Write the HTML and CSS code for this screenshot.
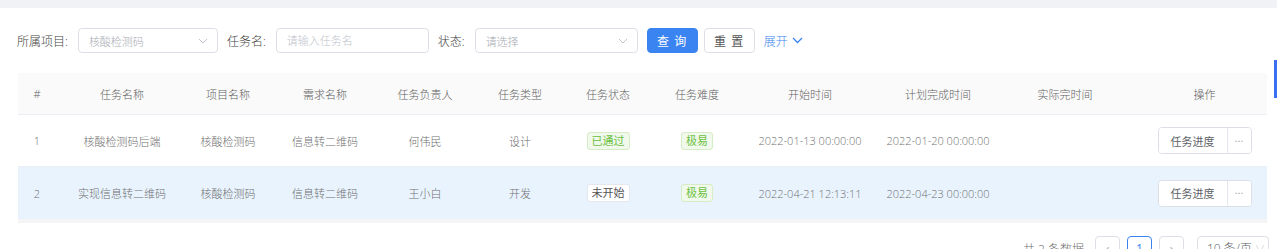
FILE: index.html
```html
<!DOCTYPE html>
<html lang="zh-CN">
<head>
    <meta charset="UTF-8">
    <meta name="viewport" content="width=device-width, initial-scale=1.0">
    <title>任务列表</title>
    <link rel="stylesheet" href="styles.css">
</head>
<body>
<div class="top-band"></div>
<div class="page">
    <form class="search-form">
        <div class="form-item">
            <label>所属项目:</label>
            <div class="select select-project">
                <span class="select-value">核酸检测码</span>
                <svg class="arrow" width="10" height="6" viewBox="0 0 10 6"><path d="M1 1l4 4 4-4" fill="none" stroke="#c0c4cc" stroke-width="1"/></svg>
            </div>
        </div>
        <div class="form-item">
            <label>任务名:</label>
            <input class="text-input" type="text" placeholder="请输入任务名">
        </div>
        <div class="form-item">
            <label>状态:</label>
            <div class="select select-status">
                <span class="select-value">请选择</span>
                <svg class="arrow" width="10" height="6" viewBox="0 0 10 6"><path d="M1 1l4 4 4-4" fill="none" stroke="#c0c4cc" stroke-width="1"/></svg>
            </div>
        </div>
        <button type="button" class="btn btn-primary">查 询</button>
        <button type="button" class="btn">重 置</button>
        <a class="expand-link">展开
            <svg width="11" height="7" viewBox="0 0 11 7"><path d="M1 1l4.5 4.5L10 1" fill="none" stroke="#3a84f2" stroke-width="1.3"/></svg>
        </a>
    </form>

    <div class="table-wrap">
        <table class="task-table">
            <colgroup>
                <col style="width:38px">
                <col style="width:132px">
                <col style="width:80px">
                <col style="width:114px">
                <col style="width:86px">
                <col style="width:104px">
                <col style="width:72px">
                <col style="width:106px">
                <col style="width:120px">
                <col style="width:136px">
                <col style="width:118px">
                <col style="width:143px">
            </colgroup>
            <thead>
            <tr>
                <th>#</th>
                <th>任务名称</th>
                <th>项目名称</th>
                <th>需求名称</th>
                <th>任务负责人</th>
                <th>任务类型</th>
                <th>任务状态</th>
                <th>任务难度</th>
                <th>开始时间</th>
                <th>计划完成时间</th>
                <th>实际完时间</th>
                <th class="col-action">操作</th>
            </tr>
            </thead>
            <tbody>
            <tr>
                <td>1</td>
                <td>核酸检测码后端</td>
                <td>核酸检测码</td>
                <td>信息转二维码</td>
                <td>何伟民</td>
                <td>设计</td>
                <td><span class="tag tag-success">已通过</span></td>
                <td><span class="tag tag-success">极易</span></td>
                <td>2022-01-13 00:00:00</td>
                <td>2022-01-20 00:00:00</td>
                <td></td>
                <td class="col-action">
                    <div class="btn-group">
                        <button type="button" class="group-main">任务进度</button>
                        <button type="button" class="group-more">⋯</button>
                    </div>
                </td>
            </tr>
            <tr class="row-active">
                <td>2</td>
                <td>实现信息转二维码</td>
                <td>核酸检测码</td>
                <td>信息转二维码</td>
                <td>王小白</td>
                <td>开发</td>
                <td><span class="tag tag-default">未开始</span></td>
                <td><span class="tag tag-success">极易</span></td>
                <td>2022-04-21 12:13:11</td>
                <td>2022-04-23 00:00:00</td>
                <td></td>
                <td class="col-action">
                    <div class="btn-group">
                        <button type="button" class="group-main">任务进度</button>
                        <button type="button" class="group-more">⋯</button>
                    </div>
                </td>
            </tr>
            </tbody>
        </table>
    </div>

    <div class="pagination">
        <span class="total">共 2 条数据</span>
        <button type="button" class="page-btn">&lsaquo;</button>
        <button type="button" class="page-btn page-current">1</button>
        <button type="button" class="page-btn">&rsaquo;</button>
        <div class="page-size">10 条/页 <span class="size-arrow">∨</span></div>
    </div>
</div>
<div class="side-tab"></div>
</body>
</html>
```

FILE: styles.css
```css
body {
    margin: 0;
    font-family: "Open Sans", "Noto Sans CJK SC", sans-serif;
    font-size: 11px;
    font-weight: 300;
    color: #707070;
    background-color: #fff;
    overflow: hidden;
}
.top-band {
    height: 8px;
    background-color: #f0f2f5;
}
.page {
    padding-top: 20px;
}
.search-form {
    display: flex;
    align-items: center;
    padding-left: 17px;
    height: 25px;
}
.form-item {
    display: flex;
    align-items: center;
    margin-right: 9px;
}
.form-item label {
    color: #444;
    font-size: 12px;
    margin-right: 10px;
    white-space: nowrap;
}
.select,
.text-input {
    box-sizing: border-box;
    height: 25px;
    border: 1px solid #dcdfe6;
    border-radius: 4px;
    background: #fff;
    font-family: inherit;
    font-weight: 300;
    font-size: 11px;
}
.select {
    display: flex;
    align-items: center;
    justify-content: space-between;
    padding: 0 9px 0 10px;
    color: #a8abb2;
}
.select-project {
    width: 140px;
}
.select-status {
    width: 163px;
}
.text-input {
    width: 153px;
    padding: 0 10px;
    color: #606266;
    outline: none;
}
.text-input::placeholder {
    color: #c0c4cc;
}
.btn {
    box-sizing: border-box;
    height: 25px;
    width: 51px;
    border: 1px solid #dcdfe6;
    border-radius: 4px;
    background: #fff;
    color: #555;
    font-family: inherit;
    font-size: 12px;
    letter-spacing: 1px;
    margin-right: 6px;
    padding: 0;
    cursor: pointer;
}
.btn-primary {
    background-color: #3a84f2;
    border-color: #3a84f2;
    color: #fff;
}
.expand-link {
    display: flex;
    align-items: center;
    gap: 4px;
    margin-left: 3px;
    font-size: 12px;
    color: #3a84f2;
    cursor: pointer;
}
.table-wrap {
    margin: 20px 0 0 18px;
    width: 1249px;
    border-bottom: 4px solid #f5f5f5;
}
.task-table {
    width: 1249px;
    table-layout: fixed;
    border-collapse: collapse;
}
.task-table th,
.task-table td {
    text-align: center;
    padding: 0;
    border-bottom: 1px solid #ebeef5;
    white-space: nowrap;
}
.task-table th {
    height: 41px;
    background-color: #fafafa;
    font-weight: 300;
    color: #606060;
}
.task-table td {
    height: 51px;
}
.task-table tbody tr:last-child td {
    height: 52px;
    border-bottom: none;
}
.task-table .col-action {
    padding-left: 18px;
}
.row-active td {
    background-color: #e8f3fe;
}
.tag {
    display: inline-block;
    box-sizing: border-box;
    height: 18px;
    line-height: 16px;
    padding: 0 4px;
    font-size: 11px;
    font-weight: 400;
    border-radius: 3px;
    border: 1px solid;
}
.tag-success {
    background-color: #f0f9eb;
    border-color: #d5ecc4;
    color: #6cc040;
}
.tag-default {
    background-color: #fff;
    border-color: #e4e7ed;
    color: #555;
}
.btn-group {
    display: inline-flex;
    box-sizing: border-box;
    height: 27px;
    border: 1px solid #dcdfe6;
    border-radius: 4px;
    background: #fff;
    overflow: hidden;
    vertical-align: middle;
}
.btn-group button {
    border: none;
    background: #fff;
    font-family: inherit;
    font-weight: 400;
    font-size: 11px;
    color: #606266;
    padding: 0;
    cursor: pointer;
}
.group-main {
    width: 69px;
    border-right: 1px solid #e4e7ed !important;
}
.group-more {
    width: 23px;
    font-family: "DejaVu Sans", sans-serif !important;
    font-size: 9px !important;
    color: #999 !important;
}
.pagination {
    display: flex;
    align-items: center;
    justify-content: flex-end;
    margin-top: 13px;
    padding-right: 8px;
    font-size: 12px;
}
.total {
    margin-right: 11px;
}
.page-btn {
    box-sizing: border-box;
    width: 25px;
    height: 25px;
    border: 1px solid #dcdfe6;
    border-radius: 4px;
    background: #fff;
    color: #999;
    font-family: inherit;
    font-size: 12px;
    margin-right: 7px;
    padding: 0;
}
.page-current {
    border-color: #3a84f2;
    color: #3a84f2;
}
.page-size {
    box-sizing: border-box;
    width: 72px;
    height: 25px;
    line-height: 23px;
    margin-left: 6px;
    border: 1px solid #dcdfe6;
    border-radius: 4px;
    padding-left: 9px;
    color: #606266;
}
.size-arrow {
    color: #c0c4cc;
    font-size: 10px;
}
.side-tab {
    position: absolute;
    right: 0;
    top: 60px;
    width: 3px;
    height: 38px;
    background-color: #3a6ff0;
}
```
